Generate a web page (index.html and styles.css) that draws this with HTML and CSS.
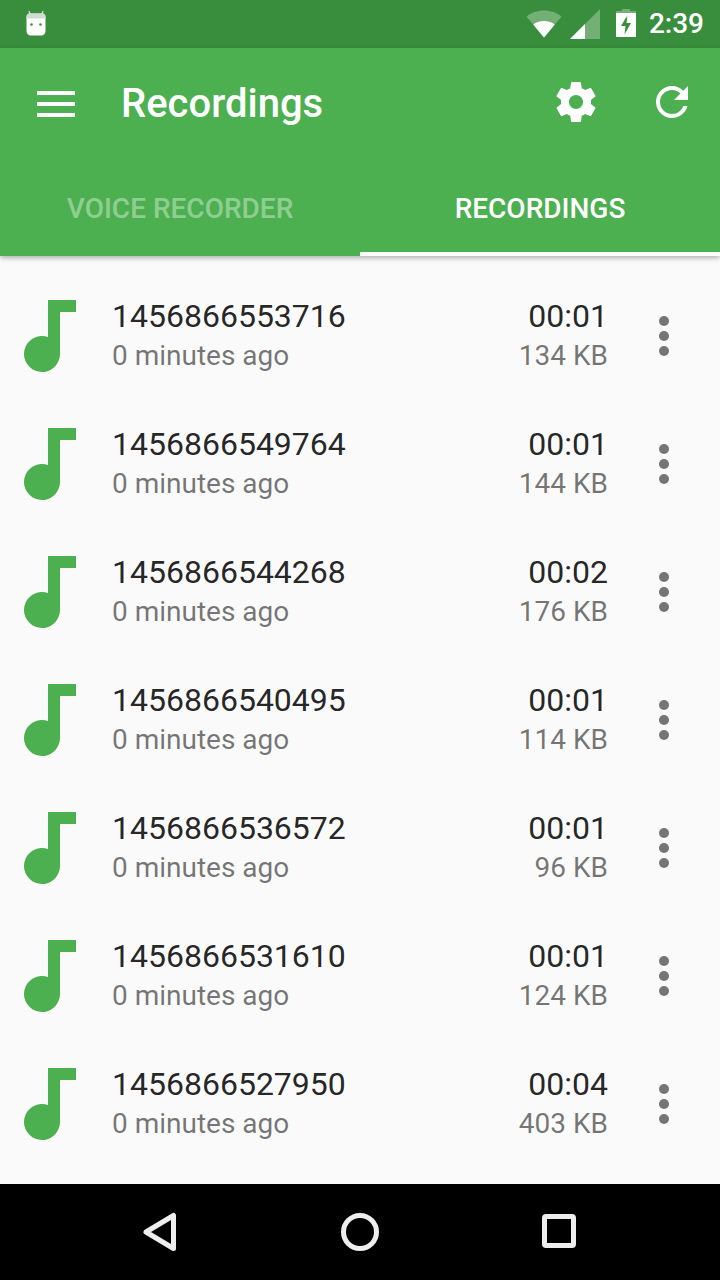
FILE: index.html
```html
<!DOCTYPE html>
<html lang="en">
<head>
<meta charset="utf-8">
<title>Recordings</title>
<link rel="stylesheet" href="styles.css">
</head>
<body>
<div class="phone">
  <header class="status-bar">
    <svg class="android" viewBox="0 0 24 28" width="24" height="28">
      <path class="ant" d="M5 1l2 7M19 1l-2 7"/>
      <path class="head" d="M6 3.5h12c2.2 0 3.5 1.3 3.5 3.5v14c0 2.700-1.800 4.500-4.500 4.500H7c-2.700 0-4.500-1.800-4.500-4.500V7c0-2.200 1.300-3.500 3.500-3.500z"/>
      <path class="head-top" d="M5.500 3.500h13c1.900 0 3 1.100 3 3v2h-19v-2c0-1.900 1.100-3 3-3z"/>
      <circle class="eye" cx="7.500" cy="14.500" r="1.300"/>
      <circle class="eye" cx="16.500" cy="14.500" r="1.300"/>
    </svg>
    <div class="status-right">
      <svg class="wifi" viewBox="0 0 36 30" width="36" height="30">
        <path class="dim" d="M18 28.500L0.500 7.500C5 3.800 11 1.500 18 1.500s13 2.300 17.500 6z"/>
        <path class="solid" d="M18 28.500L7.200 15.500C10 13.300 13.800 12 18 12s8 1.300 10.800 3.500z"/>
      </svg>
      <svg class="signal" viewBox="0 0 30 30" width="30" height="30">
        <path class="dim" d="M30 0v30H0z"/>
        <path class="solid" d="M15 15v15H0z"/>
      </svg>
      <svg class="battery" viewBox="0 0 20 30" width="20" height="30">
        <path class="dim" d="M6 0h8v2h6v7H0V2h6z"/>
        <path class="solid" fill-rule="evenodd" d="M0 4h20v24H0zM11.500 6L5 17h4.500l-1 8.500L15 14h-4.500z"/>
      </svg>
      <span class="clock">2:39</span>
    </div>
  </header>

  <div class="app-bar">
    <div class="toolbar">
      <button class="menu-btn" aria-label="Menu">
        <span></span><span></span><span></span>
      </button>
      <h1 class="title">Recordings</h1>
      <button class="action" aria-label="Settings">
        <svg viewBox="0 0 24 24" width="48" height="48"><path class="solid" d="M19.430 12.980c.04-.32.07-.64.07-.98s-.03-.66-.07-.98l2.110-1.650c.19-.15.24-.42.12-.64l-2-3.460c-.12-.22-.39-.3-.61-.22l-2.490 1c-.52-.4-1.080-.73-1.690-.98l-.38-2.650C14.460 2.180 14.250 2 14 2h-4c-.25 0-.46.18-.49.42l-.38 2.650c-.61.25-1.170.59-1.690.98l-2.490-1c-.23-.09-.49 0-.61.22l-2 3.460c-.13.22-.07.49.12.64l2.110 1.650c-.04.32-.07.65-.07.980s.03.660.07.980l-2.110 1.650c-.19.150-.24.420-.12.640l2 3.460c.12.220.39.300.61.220l2.490-1c.52.400 1.080.730 1.690.980l.38 2.650c.03.240.24.420.49.420h4c.25 0 .46-.18.49-.42l.38-2.650c.61-.25 1.170-.59 1.690-.98l2.490 1c.23.090.49 0 .61-.22l2-3.460c.12-.22.070-.49-.12-.64l-2.110-1.650zM12 15.500c-1.930 0-3.500-1.570-3.500-3.500s1.570-3.500 3.500-3.500 3.500 1.570 3.500 3.500-1.570 3.500-3.500 3.500z"/></svg>
      </button>
      <button class="action" aria-label="Refresh">
        <svg viewBox="0 0 24 24" width="48" height="48"><path class="solid" d="M17.650 6.350C16.200 4.900 14.210 4 12 4c-4.420 0-7.990 3.580-7.990 8s3.570 8 7.990 8c3.730 0 6.840-2.550 7.730-6h-2.080c-.82 2.330-3.040 4-5.650 4-3.310 0-6-2.690-6-6s2.690-6 6-6c1.660 0 3.140.69 4.220 1.780L13 11h7V4l-2.350 2.350z"/></svg>
      </button>
    </div>
    <nav class="tabs">
      <a class="tab">VOICE RECORDER</a>
      <a class="tab active">RECORDINGS</a>
    </nav>
  </div>

  <main class="list">
    <div class="row">
      <svg class="note" viewBox="0 0 52 72" width="52" height="72"><path d="M24 0h28v12H36v42a18 18 0 1 1-12-17z"/></svg>
      <div class="info"><div class="name">1456866553716</div><div class="sub">0 minutes ago</div></div>
      <div class="meta"><div class="name">00:01</div><div class="sub">134 KB</div></div>
      <div class="more"><i></i><i></i><i></i></div>
    </div>
    <div class="row">
      <svg class="note" viewBox="0 0 52 72" width="52" height="72"><path d="M24 0h28v12H36v42a18 18 0 1 1-12-17z"/></svg>
      <div class="info"><div class="name">1456866549764</div><div class="sub">0 minutes ago</div></div>
      <div class="meta"><div class="name">00:01</div><div class="sub">144 KB</div></div>
      <div class="more"><i></i><i></i><i></i></div>
    </div>
    <div class="row">
      <svg class="note" viewBox="0 0 52 72" width="52" height="72"><path d="M24 0h28v12H36v42a18 18 0 1 1-12-17z"/></svg>
      <div class="info"><div class="name">1456866544268</div><div class="sub">0 minutes ago</div></div>
      <div class="meta"><div class="name">00:02</div><div class="sub">176 KB</div></div>
      <div class="more"><i></i><i></i><i></i></div>
    </div>
    <div class="row">
      <svg class="note" viewBox="0 0 52 72" width="52" height="72"><path d="M24 0h28v12H36v42a18 18 0 1 1-12-17z"/></svg>
      <div class="info"><div class="name">1456866540495</div><div class="sub">0 minutes ago</div></div>
      <div class="meta"><div class="name">00:01</div><div class="sub">114 KB</div></div>
      <div class="more"><i></i><i></i><i></i></div>
    </div>
    <div class="row">
      <svg class="note" viewBox="0 0 52 72" width="52" height="72"><path d="M24 0h28v12H36v42a18 18 0 1 1-12-17z"/></svg>
      <div class="info"><div class="name">1456866536572</div><div class="sub">0 minutes ago</div></div>
      <div class="meta"><div class="name">00:01</div><div class="sub">96 KB</div></div>
      <div class="more"><i></i><i></i><i></i></div>
    </div>
    <div class="row">
      <svg class="note" viewBox="0 0 52 72" width="52" height="72"><path d="M24 0h28v12H36v42a18 18 0 1 1-12-17z"/></svg>
      <div class="info"><div class="name">1456866531610</div><div class="sub">0 minutes ago</div></div>
      <div class="meta"><div class="name">00:01</div><div class="sub">124 KB</div></div>
      <div class="more"><i></i><i></i><i></i></div>
    </div>
    <div class="row">
      <svg class="note" viewBox="0 0 52 72" width="52" height="72"><path d="M24 0h28v12H36v42a18 18 0 1 1-12-17z"/></svg>
      <div class="info"><div class="name">1456866527950</div><div class="sub">0 minutes ago</div></div>
      <div class="meta"><div class="name">00:04</div><div class="sub">403 KB</div></div>
      <div class="more"><i></i><i></i><i></i></div>
    </div>
  </main>

  <footer class="nav-bar">
    <svg viewBox="0 0 36 40" width="36" height="40"><path class="nav-line" d="M31.500 3.500v33L4 20z"/></svg>
    <svg viewBox="0 0 40 40" width="40" height="40"><circle class="nav-line" cx="20" cy="20" r="16.500"/></svg>
    <svg viewBox="0 0 36 36" width="36" height="36"><rect class="nav-line" x="2.500" y="2.500" width="29" height="29" rx="1.500"/></svg>
  </footer>
</div>
</body>
</html>
```

FILE: styles.css
```css
* { box-sizing: border-box; }

html, body { margin: 0; padding: 0; }

body {
  width: 720px;
  height: 1280px;
  overflow: hidden;
  font-family: Roboto, "Liberation Sans", sans-serif;
  background: #fafafa;
}

.phone {
  width: 720px;
  height: 1280px;
  display: flex;
  flex-direction: column;
}

.solid { fill: #fff; }
.dim { fill: #fff; fill-opacity: 0.3; }

/* status bar */
.status-bar {
  height: 48px;
  flex: none;
  background: #388e3c;
  display: flex;
  align-items: center;
  justify-content: space-between;
  padding: 0 16px 0 24px;
}

.android .ant { stroke: #fff; stroke-width: 1.2; fill: none; opacity: 0.8; }
.android .head { fill: #fff; }
.android .head-top { fill: #cfdcd0; }
.android .eye { fill: #388e3c; }

.status-right {
  display: flex;
  align-items: center;
  height: 48px;
}

.wifi { margin-right: 8px; }
.signal { margin-right: 16px; }
.battery { margin-right: 13px; }

.clock {
  font-size: 28px;
  font-weight: 500;
  color: #fff;
  line-height: 48px;
}

/* app bar */
.app-bar {
  position: relative;
  z-index: 1;
  flex: none;
  background: #4caf50;
  box-shadow: 0 2px 5px rgba(0, 0, 0, 0.3);
}

.toolbar {
  height: 112px;
  display: flex;
  align-items: center;
  padding-right: 24px;
}

button {
  border: 0;
  padding: 0;
  background: none;
}

.menu-btn {
  width: 38px;
  height: 26px;
  margin-left: 37px;
  margin-top: -1px;
  display: flex;
  flex-direction: column;
  justify-content: space-between;
}

.menu-btn span {
  display: block;
  height: 4px;
  background: #fff;
}

.title {
  margin: 0 0 0 46px;
  flex: 1;
  font-size: 40px;
  font-weight: 500;
  color: #fff;
  line-height: 56px;
}

.action {
  width: 48px;
  height: 48px;
  margin-left: 48px;
  margin-top: -4px;
  display: block;
}

.action svg { display: block; }

.tabs {
  height: 96px;
  display: flex;
}

.tab {
  flex: 1;
  text-align: center;
  font-size: 28px;
  font-weight: 500;
  line-height: 98px;
  color: rgba(255, 255, 255, 0.4);
}

.tab.active {
  color: #fff;
  box-shadow: inset 0 -4px 0 #fff;
}

/* recordings list */
.list {
  flex: 1;
  padding: 16px 0;
  background: #fafafa;
}

.row {
  height: 128px;
  display: flex;
  align-items: center;
  padding-left: 24px;
}

.note { flex: none; }
.note path { fill: #4caf50; }

.info {
  flex: 1;
  margin-left: 36px;
}

.meta {
  text-align: right;
}

.name {
  font-size: 32px;
  line-height: 40px;
  color: rgba(0, 0, 0, 0.87);
}

.sub {
  font-size: 28px;
  line-height: 40px;
  color: rgba(0, 0, 0, 0.54);
}

.more {
  width: 112px;
  flex: none;
  display: flex;
  flex-direction: column;
  align-items: center;
  gap: 5px;
}

.more i {
  display: block;
  width: 10px;
  height: 10px;
  border-radius: 50%;
  background: #757575;
}

/* system navigation */
.nav-bar {
  height: 96px;
  flex: none;
  background: #000;
  display: flex;
  align-items: center;
  justify-content: space-between;
  padding: 0 142px 0 142px;
}

.nav-line {
  fill: none;
  stroke: #eee;
  stroke-width: 5;
  stroke-linejoin: round;
}
```
